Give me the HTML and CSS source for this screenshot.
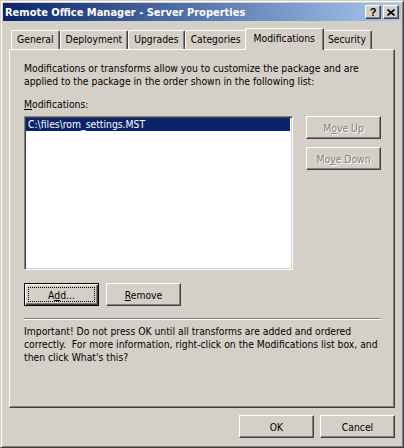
FILE: index.html
```html
<!DOCTYPE html>
<html lang="en">
<head>
  <meta charset="UTF-8">
  <title>Remote Office Manager - Server Properties</title>
  <link rel="stylesheet" href="styles.css">
</head>
<body>
  <div class="window">
    <!-- Title bar -->
    <div class="titlebar">
      <span class="title">Remote Office Manager - Server Properties</span>
      <div class="caption-buttons">
        <button class="caption-btn help">?</button>
        <button class="caption-btn close">
          <svg width="8" height="7" viewBox="0 0 8 7">
            <path d="M0.5 0.5 L7.5 6.5 M7.5 0.5 L0.5 6.5" stroke="#000" stroke-width="1.6" fill="none"/>
          </svg>
        </button>
      </div>
    </div>

    <!-- Tabs -->
    <div class="tabs">
      <div class="tab">General</div>
      <div class="tab">Deployment</div>
      <div class="tab">Upgrades</div>
      <div class="tab">Categories</div>
      <div class="tab active">Modifications</div>
      <div class="tab">Security</div>
    </div>

    <!-- Tab page -->
    <div class="page">
      <p class="intro">Modifications or transforms allow you to customize the package and are<br>applied to the package in the order shown in the following list:</p>
      <div class="list-label"><u>M</u>odifications:</div>
      <div class="list-row">
        <div class="listbox">
          <div class="list-item selected">C:\files\rom_settings.MST</div>
        </div>
        <div class="side-buttons">
          <button class="btn" disabled>M<u>o</u>ve Up</button>
          <button class="btn" disabled>Mo<u>v</u>e Down</button>
        </div>
      </div>
      <div class="action-row">
        <button class="btn default">A<u>d</u>d...</button>
        <button class="btn"><u>R</u>emove</button>
      </div>
      <div class="separator"></div>
      <p class="note">Important! Do not press OK until all transforms are added and ordered<br>correctly.&nbsp; For more information, right-click on the Modifications list box, and<br>then click What's this?</p>
    </div>

    <!-- Dialog buttons -->
    <div class="footer">
      <button class="btn">OK</button>
      <button class="btn">Cancel</button>
    </div>
  </div>
</body>
</html>
```

FILE: styles.css
```css
body {
  margin: 0;
  font-family: "DejaVu Sans Condensed", "Liberation Sans", Arial, sans-serif;
  font-size: 10.3px;
  color: #000;
  background-color: #D4D0C8;
}
.window {
  width: 404px;
  height: 448px;
  box-sizing: border-box;
  background-color: #D4D0C8;
  border: 1px solid;
  border-color: #D4D0C8 #404040 #404040 #D4D0C8;
  box-shadow: inset 1px 1px #fff, inset -1px -1px #808080;
  padding: 2px;
  display: flex;
  flex-direction: column;
}
.titlebar {
  height: 18px;
  flex: none;
  display: flex;
  align-items: center;
  justify-content: space-between;
  padding: 0 2px;
  background: linear-gradient(to right, #0A246A, #A6CAF0);
}
.title {
  color: #fff;
  font-weight: bold;
  font-size: 11px;
}
.caption-buttons {
  display: flex;
  gap: 2px;
}
.caption-btn {
  width: 16px;
  height: 14px;
  box-sizing: border-box;
  padding: 0;
  background-color: #D4D0C8;
  border: 1px solid;
  border-color: #fff #404040 #404040 #fff;
  box-shadow: inset -1px -1px #808080;
  display: flex;
  align-items: center;
  justify-content: center;
  font-family: "Liberation Sans", Arial, sans-serif;
  font-weight: bold;
  font-size: 11px;
  line-height: 12px;
}
.caption-btn svg {
  display: block;
}

/* tabs */
.tabs {
  display: flex;
  align-items: flex-end;
  height: 21px;
  margin: 7px 6px 0 6px;
  padding-left: 2px;
}
.tab {
  height: 19px;
  box-sizing: border-box;
  padding: 0 5px;
  line-height: 17px;
  border-top: 1px solid #fff;
  border-left: 1px solid #fff;
  border-right: 1px solid #404040;
  box-shadow: inset -1px 0 #808080;
  border-radius: 2px 2px 0 0;
  background-color: #D4D0C8;
}
.tab.active {
  height: 22px;
  margin: 0 -2px -1px -2px;
  padding: 0 8px;
  line-height: 18px;
  position: relative;
  z-index: 1;
}

/* tab page */
.page {
  height: 359px;
  flex: none;
  box-sizing: border-box;
  margin: 0 6px;
  border: 1px solid;
  border-color: #fff #404040 #404040 #fff;
  box-shadow: inset -1px -1px #808080;
  padding: 12px 13px 0 14px;
}
.intro, .note {
  margin: 0;
  line-height: 13px;
}
.list-label {
  margin-top: 10px;
  line-height: 13px;
}
.list-row {
  margin-top: 5px;
  display: flex;
  justify-content: space-between;
}
.listbox {
  width: 269px;
  height: 154px;
  box-sizing: border-box;
  background-color: #fff;
  border: 1px solid;
  border-color: #808080 #fff #fff #808080;
  box-shadow: inset 1px 1px #404040, inset -1px -1px #D4D0C8;
  padding: 1px 2px 0 1px;
}
.list-item {
  height: 13px;
  line-height: 13px;
  padding-left: 2px;
}
.list-item.selected {
  background-color: #0A246A;
  color: #fff;
}
.side-buttons {
  display: flex;
  flex-direction: column;
  gap: 8px;
}
.btn {
  width: 75px;
  height: 23px;
  box-sizing: border-box;
  padding: 0;
  background-color: #D4D0C8;
  border: 1px solid;
  border-color: #fff #404040 #404040 #fff;
  box-shadow: inset -1px -1px #808080;
  font-family: inherit;
  font-size: 10.3px;
  color: #000;
}
.btn:disabled {
  color: #808080;
  text-shadow: 1px 1px 0 #fff;
}
.btn.default {
  border: 1px solid #000;
  box-shadow: inset 1px 1px #fff, inset -1px -1px #404040, inset -2px -2px #808080;
  outline: 1px dotted #000;
  outline-offset: -5px;
}
.action-row {
  margin-top: 13px;
  display: flex;
  gap: 7px;
}
.separator {
  margin-top: 12px;
  border-top: 1px solid #808080;
  border-bottom: 1px solid #fff;
}
.note {
  margin-top: 5px;
}

/* dialog buttons */
.footer {
  margin: 7px 6px 0 0;
  display: flex;
  justify-content: flex-end;
  gap: 6px;
}
```
